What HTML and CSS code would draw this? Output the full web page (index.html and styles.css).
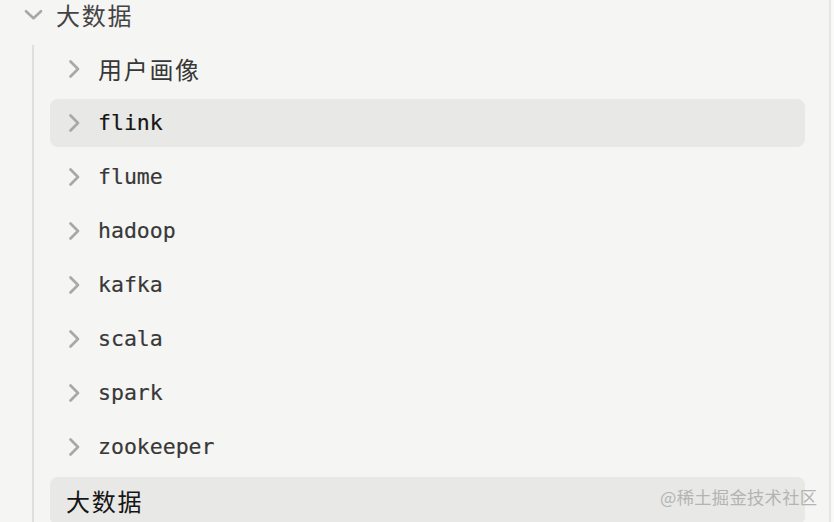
FILE: index.html
```html
<!DOCTYPE html>
<html lang="zh">
<head>
<meta charset="utf-8">
<link rel="stylesheet" href="styles.css">
</head>
<body>
<div class="panel">
  <div class="header">
    <svg class="chev-down" width="19" height="12" viewBox="0 0 19 12"><path d="M2 2.2 L9.5 9.2 L17 2.2" fill="none" stroke="#a8a8a8" stroke-width="2.6" stroke-linecap="round" stroke-linejoin="round"/></svg>
    <span class="cjk head-title">大数据</span>
  </div>
  <div class="children">
    <div class="row"><svg class="chev" width="13" height="20" viewBox="0 0 13 20"><path d="M2.5 2.5 L10 10 L2.5 17.5" fill="none" stroke="#a8a8a8" stroke-width="2.7" stroke-linecap="round" stroke-linejoin="round"/></svg><span class="cjk label">用户画像</span></div>
    <div class="row active"><svg class="chev" width="13" height="20" viewBox="0 0 13 20"><path d="M2.5 2.5 L10 10 L2.5 17.5" fill="none" stroke="#a8a8a8" stroke-width="2.7" stroke-linecap="round" stroke-linejoin="round"/></svg><span class="label">flink</span></div>
    <div class="row"><svg class="chev" width="13" height="20" viewBox="0 0 13 20"><path d="M2.5 2.5 L10 10 L2.5 17.5" fill="none" stroke="#a8a8a8" stroke-width="2.7" stroke-linecap="round" stroke-linejoin="round"/></svg><span class="label">flume</span></div>
    <div class="row"><svg class="chev" width="13" height="20" viewBox="0 0 13 20"><path d="M2.5 2.5 L10 10 L2.5 17.5" fill="none" stroke="#a8a8a8" stroke-width="2.7" stroke-linecap="round" stroke-linejoin="round"/></svg><span class="label">hadoop</span></div>
    <div class="row"><svg class="chev" width="13" height="20" viewBox="0 0 13 20"><path d="M2.5 2.5 L10 10 L2.5 17.5" fill="none" stroke="#a8a8a8" stroke-width="2.7" stroke-linecap="round" stroke-linejoin="round"/></svg><span class="label">kafka</span></div>
    <div class="row"><svg class="chev" width="13" height="20" viewBox="0 0 13 20"><path d="M2.5 2.5 L10 10 L2.5 17.5" fill="none" stroke="#a8a8a8" stroke-width="2.7" stroke-linecap="round" stroke-linejoin="round"/></svg><span class="label">scala</span></div>
    <div class="row"><svg class="chev" width="13" height="20" viewBox="0 0 13 20"><path d="M2.5 2.5 L10 10 L2.5 17.5" fill="none" stroke="#a8a8a8" stroke-width="2.7" stroke-linecap="round" stroke-linejoin="round"/></svg><span class="label">spark</span></div>
    <div class="row"><svg class="chev" width="13" height="20" viewBox="0 0 13 20"><path d="M2.5 2.5 L10 10 L2.5 17.5" fill="none" stroke="#a8a8a8" stroke-width="2.7" stroke-linecap="round" stroke-linejoin="round"/></svg><span class="label">zookeeper</span></div>
    <div class="row leaf active"><span class="cjk label dark">大数据</span></div>
  </div>
  <div class="watermark">@稀土掘金技术社区</div>
</div>
</body>
</html>
```

FILE: styles.css
```css
html, body {
  margin: 0;
  padding: 0;
  height: 100%;
  overflow: hidden;
  background: #fafaf9;
}

.panel {
  position: relative;
  width: 829px;
  height: 522px;
  background: #f5f5f3;
  border-right: 2px solid #e6e6e4;
  font-family: "DejaVu Sans Mono", "Noto Sans CJK SC", monospace;
  color: #3a3a3a;
  overflow: hidden;
}

.header {
  display: flex;
  align-items: center;
  height: 30px;
  margin-bottom: 15px;
  padding-left: 24px;
}

.chev-down {
  display: block;
  margin-right: 13px;
}

.cjk {
  font-family: "Noto Sans CJK SC", sans-serif;
  font-size: 24px;
  letter-spacing: 1.7px;
}

.head-title {
  color: #444;
  line-height: 1;
}

.children {
  margin-left: 32px;
  border-left: 2px solid #dfdfdd;
  padding-left: 16px;
  padding-right: 24px;
  display: flex;
  flex-direction: column;
  gap: 6px;
  min-height: 480px;
}

.row {
  display: flex;
  align-items: center;
  height: 48px;
  padding-left: 18px;
  border-radius: 8px;
}

.row.active {
  background: #e8e8e6;
}

.row.leaf {
  padding-left: 16px;
}

.chev {
  display: block;
  margin-right: 17px;
}

.label {
  font-size: 21.5px;
  line-height: 48px;
  color: #383838;
  -webkit-text-stroke: 0.2px currentColor;
}

.cjk.label {
  font-size: 24px;
  -webkit-text-stroke: 0;
}

.row.active .label {
  color: #151515;
}

.label.dark {
  color: #1e1e1e;
}

.watermark {
  position: absolute;
  left: 660px;
  top: 484px;
  font-family: "Noto Sans CJK SC", sans-serif;
  font-size: 17.3px;
  color: #b4b4b4;
  letter-spacing: 0.3px;
}
```
